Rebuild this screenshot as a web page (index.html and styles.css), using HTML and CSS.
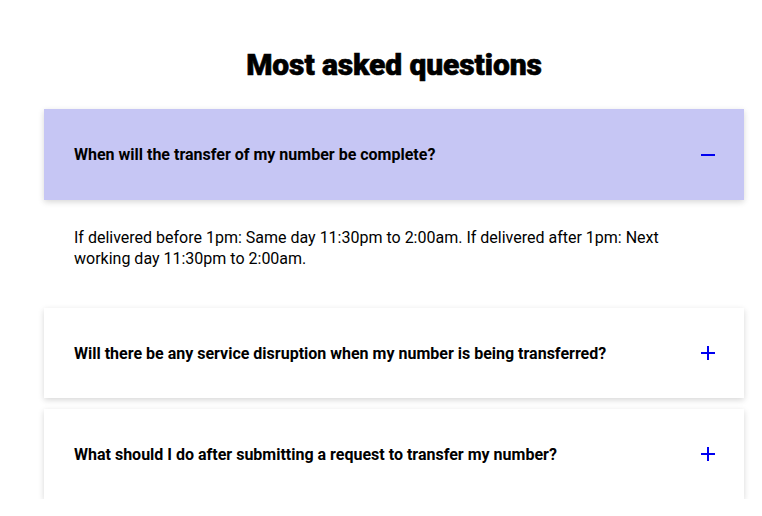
FILE: index.html
```html
<!DOCTYPE html>
<html lang="en">
<head>
<meta charset="utf-8">
<title>FAQ</title>
<link rel="stylesheet" href="styles.css">
</head>
<body>
<main class="faq">
  <h1 class="faq-title">Most asked questions</h1>
  <div class="faq-list">
    <section class="faq-item open">
      <div class="faq-head">
        <span class="faq-q">When will the transfer of my number be complete?</span>
        <svg class="faq-icon" width="14" height="14" viewBox="0 0 14 14"><path d="M0 7H14" stroke="#0000f0" stroke-width="2"/></svg>
      </div>
      <div class="faq-body">If delivered before 1pm: Same day 11:30pm to 2:00am. If delivered after 1pm: Next working day 11:30pm to 2:00am.</div>
    </section>
    <section class="faq-item">
      <div class="faq-head">
        <span class="faq-q">Will there be any service disruption when my number is being transferred?</span>
        <svg class="faq-icon" width="14" height="14" viewBox="0 0 14 14"><path d="M0 7H14M7 0V14" stroke="#0000f0" stroke-width="2"/></svg>
      </div>
    </section>
    <section class="faq-item">
      <div class="faq-head">
        <span class="faq-q">What should I do after submitting a request to transfer my number?</span>
        <svg class="faq-icon" width="14" height="14" viewBox="0 0 14 14"><path d="M0 7H14M7 0V14" stroke="#0000f0" stroke-width="2"/></svg>
      </div>
    </section>
  </div>
</main>
</body>
</html>
```
FILE: styles.css
```css
* { box-sizing: border-box; }
html, body { margin: 0; padding: 0; background: #fff; }
body { font-family: Roboto, "Liberation Sans", sans-serif; color: #000; }
.faq {
  width: 700px;
  margin-left: 44px;
  padding-top: 43px;
  display: flex;
  flex-direction: column;
}
.faq-title {
  margin: 0 0 22px;
  text-align: center;
  font-family: Roboto, "DejaVu Sans Condensed", sans-serif;
  font-weight: 900;
  font-size: 30px;
  line-height: 44px;
  letter-spacing: -0.1px;
  -webkit-text-stroke: 0.6px #000;
}
.faq-list { display: flex; flex-direction: column; gap: 10px; }
.faq-item { background: #fff; }
.faq-item + .faq-item + .faq-item { margin-top: 1px; }
.faq-head {
  height: 90px;
  padding: 0 29px 0 30px;
  display: flex;
  align-items: center;
  justify-content: space-between;
  background: #fff;
  box-shadow: 0 2px 6px rgba(0,0,0,0.16);
}
.faq-item.open .faq-head { background: #c6c6f4; height: 91px; }
.faq-q { font-size: 16px; font-weight: 700; line-height: 21px; }
.faq-icon { flex: none; }
.faq-body {
  padding: 27px 60px 29px 30px;
  font-size: 16px;
  line-height: 21px;
}
```
